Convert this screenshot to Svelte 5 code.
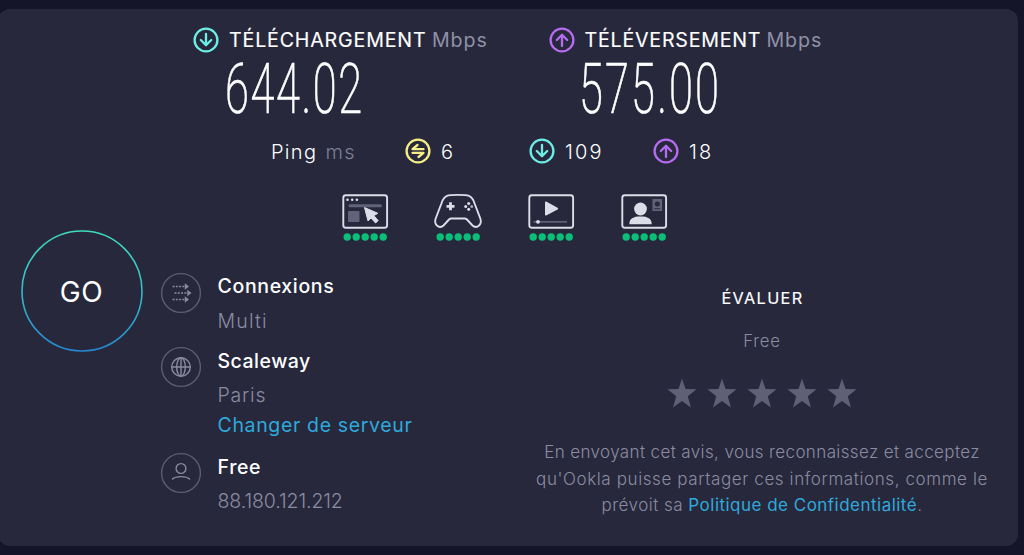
<!--
  SpeedtestResult — finished test panel: speeds, latency, quality scores,
  connection details and provider rating.
-->
<script lang="ts">
  type Direction = 'down' | 'up' | 'idle';

  const SPEEDS: { dir: Direction; label: string; value: string }[] = [
    { dir: 'down', label: 'TÉLÉCHARGEMENT', value: '644.02' },
    { dir: 'up', label: 'TÉLÉVERSEMENT', value: '575.00' },
  ];

  const PINGS: { dir: Direction; value: number }[] = [
    { dir: 'idle', value: 6 },
    { dir: 'down', value: 109 },
    { dir: 'up', value: 18 },
  ];

  const SCORES = ['web', 'gaming', 'video', 'call'];
  const DOTS = [0, 1, 2, 3, 4];
  const STARS = [1, 2, 3, 4, 5];

  const DETAILS = [
    { icon: 'multi', title: 'Connexions', text: 'Multi', link: '' },
    { icon: 'globe', title: 'Scaleway', text: 'Paris', link: 'Changer de serveur' },
    { icon: 'user', title: 'Free', text: '88.180.121.212', link: '' },
  ];

  let rating = $state(0);
</script>

{#snippet dirIcon(dir: Direction)}
  <svg class="dir dir--{dir}" viewBox="0 0 26 26" width="26" height="26">
    <circle cx="13" cy="13" r="11.4" />
    {#if dir === 'down'}
      <path d="M13 7v11M7.8 13l5.2 5.2 5.2-5.2" />
    {:else if dir === 'up'}
      <path d="M13 19V8M7.8 13L13 7.8l5.2 5.2" />
    {:else}
      <path d="M18.500 11.200H7.500l5-4.200M7.500 14.800h11l-5 4.200" />
    {/if}
  </svg>
{/snippet}

<main class="card">
  <section class="speeds">
    {#each SPEEDS as s}
      <div class="speed speed--{s.dir}">
        <div class="speed__head">
          {@render dirIcon(s.dir)}
          <span class="speed__label">{s.label}</span>
          <span class="speed__unit">Mbps</span>
        </div>
        <div class="speed__value">{s.value}</div>
      </div>
    {/each}
  </section>

  <section class="pings">
    <span class="pings__label">Ping</span>
    <span class="pings__unit">ms</span>
    {#each PINGS as p}
      <div class="ping ping--{p.dir}">
        {@render dirIcon(p.dir)}
        <span class="ping__value">{p.value}</span>
      </div>
    {/each}
  </section>

  <section class="scores">
    {#each SCORES as score}
      <svg class="score" viewBox="0 0 50 50" width="50" height="50">
        {#if score === 'gaming'}
          <path
            class="line"
            d="M14 3.8C17 2.5 33 2.5 36 3.8c3 1.2 4.500 4 5.500 7.500L47.500 27c1.800 6.500-4.500 9.800-8 6.500L34 27.500q-1-1-2.500-1h-13q-1.500 0-2.500 1l-5.500 6c-3.500 3.300-9.800 0-8-6.500L8.500 11.300C9.500 7.800 11 5 14 3.800z"
          />
          <path class="plus" d="M17.500 10.300v8M13.500 14.300h8" />
          <g class="fill">
            <circle cx="35.700" cy="11.500" r="1.500" />
            <circle cx="35.700" cy="17.300" r="1.500" />
            <circle cx="32.700" cy="14.400" r="1.500" />
            <circle class="dim" cx="38.700" cy="14.400" r="1.500" />
          </g>
        {:else}
          <rect class="line" x="3.300" y="3.300" width="43.800" height="32.400" rx="2.500" />
        {/if}
        {#if score === 'web'}
          <g class="fill">
            <circle cx="7.500" cy="7.700" r="1.300" />
            <circle cx="12.200" cy="7.700" r="1.300" />
            <circle cx="16.900" cy="7.700" r="1.300" />
          </g>
          <path class="bar" d="M10 13.700h30.500" />
          <rect class="dim" x="8" y="19" width="11.500" height="11" rx="1" />
          <path class="cursor" d="M24.500 15.500l3.500 13.500 3-3 4.600 5 2.600-2.400-4.400-5 4-2.300z" />
        {:else if score === 'video'}
          <path class="fill" d="M19 11q0-2 1.700-1.200L31.500 15.700q1.500.9 0 1.800l-10.800 5.800q-1.700.8-1.700-1z" />
          <path class="track" d="M7.500 29.800H41" />
          <circle class="fill" cx="12" cy="29.800" r="1.900" />
        {:else if score === 'call'}
          <circle class="fill" cx="21.500" cy="17" r="6.400" />
          <path class="fill" d="M10.300 32.300c0-6 4-7.800 11.200-7.800s11.200 1.800 11.200 7.800z" />
          <rect class="dim" x="33.500" y="7" width="9.600" height="12" />
          <circle class="hole" cx="38.300" cy="12" r="2.500" />
          <path class="hole" d="M35.300 16.300h6v1h-6z" />
        {/if}
        {#each DOTS as i}
          <circle class="dot" cx={7.2 + i * 9} cy="45" r="3.700" />
        {/each}
      </svg>
    {/each}
  </section>

  <section class="bottom">
    <button type="button" class="go">
      <svg viewBox="0 0 122 122" width="122" height="122">
        <defs>
          <linearGradient id="ring" x1="0" y1="0" x2="0" y2="1">
            <stop offset="0" stop-color="#3ddcba" />
            <stop offset="0.500" stop-color="#38b9c7" />
            <stop offset="1" stop-color="#2586cf" />
          </linearGradient>
        </defs>
        <circle cx="61" cy="61" r="60" fill="none" stroke="url(#ring)" stroke-width="1.600" />
      </svg>
      <span class="go__label">GO</span>
    </button>

    <div class="details">
      {#each DETAILS as d}
        <div class="detail detail--{d.icon}">
          <svg class="detail__icon" viewBox="0 0 42 42" width="42" height="42">
            <circle class="ring" cx="21" cy="21" r="19.400" />
            {#if d.icon === 'multi'}
              <path class="dash" d="M12.500 14.500h13M14.500 21h13M12.500 27.500h13" />
              <path class="heads" d="M24.800 11.300l4.200 3.200-4.200 3.200zM27.300 17.800l4.200 3.200-4.200 3.200zM24.800 24.300l4.200 3.200-4.200 3.200z" />
            {:else if d.icon === 'globe'}
              <circle cx="21" cy="21" r="9.300" />
              <ellipse cx="21" cy="21" rx="4.300" ry="9.300" />
              <path d="M11.700 21h18.600M21 11.700v18.600" />
            {:else}
              <circle cx="21" cy="16.500" r="4.900" />
              <path d="M12.500 27c3.500-3.200 13.500-3.200 17 0" />
            {/if}
          </svg>
          <div class="detail__body">
            <div class="detail__title">{d.title}</div>
            <div class="detail__text">{d.text}</div>
            {#if d.link}<a class="detail__link" href="#server">{d.link}</a>{/if}
          </div>
        </div>
      {/each}
    </div>

    <div class="rate">
      <div class="rate__title">ÉVALUER</div>
      <div class="rate__isp">Free</div>
      <div class="rate__stars">
        {#each STARS as n}
          <button
            type="button"
            class="star"
            class:star--on={n <= rating}
            aria-label="{n} / 5"
            onclick={() => (rating = n)}
          >
            <svg viewBox="0 0 30 30" width="30" height="30">
              <path
                d="M15 1.500l3.300 9.700 10.300.3-8.200 6.500 3 10.500L15 22.600l-8.400 5.900L9.600 18 1.400 11.500l10.300-.3z"
              />
            </svg>
          </button>
        {/each}
      </div>
      <p class="rate__terms">
        <span class="l1">En envoyant cet avis, vous reconnaissez et acceptez</span><br />
        <span class="l2">qu'Ookla puisse partager ces informations, comme le</span><br />
        <span class="l3">prévoit sa <a href="#privacy">Politique de Confidentialité</a>.</span>
      </p>
    </div>
  </section>
</main>

<style>
  :global(body) {
    background: #141529;
    overflow: hidden;
  }

  .card {
    box-sizing: border-box;
    width: 1020px;
    height: 537px;
    margin: 9px 0 9px -2px;
    padding-left: 2px;
    overflow: hidden;
    border-radius: 12px;
    background: #27283c;
    color: #fff;
    font-family: Inter, 'Liberation Sans', sans-serif;
    white-space: nowrap;
  }

  a {
    color: #2fa9dc;
    text-decoration: none;
  }

  button {
    padding: 0;
    border: 0;
    background: none;
    color: inherit;
    font: inherit;
    cursor: pointer;
  }

  svg {
    display: block;
    flex-shrink: 0;
  }

  .speeds {
    display: flex;
    height: 115px;
    padding: 17px 0 0 193px;
    box-sizing: border-box;
  }

  .speed {
    width: 355.5px;
  }

  .speed__head {
    display: flex;
    align-items: center;
    height: 27px;
    font-size: 19.6px;
    line-height: 24px;
  }

  .speed__label {
    width: 203px;
    margin-left: 10px;
    padding-top: 1px;
    font-weight: 400;
    letter-spacing: 0.85px;
    -webkit-text-stroke: 0.15px currentColor;
  }

  .speed--up .speed__label {
    width: 182px;
    letter-spacing: 0.8px;
  }

  .speed__unit {
    padding-top: 1px;
    color: #8f90a6;
    letter-spacing: 0.9px;
  }

  .speed__value {
    width: max-content;
    margin-left: 32px;
    font-family: Roboto, sans-serif;
    font-size: 70px;
    font-weight: 200;
    line-height: 72px;
    letter-spacing: 2.6px;
    -webkit-text-stroke: 0.7px currentColor;
    transform: scaleX(0.62);
    transform-origin: left;
  }

  .speed--up .speed__value {
    margin-left: 30.5px;
    letter-spacing: 3.5px;
  }

  .dir {
    fill: none;
    stroke-width: 2.3;
    stroke-linecap: round;
    stroke-linejoin: round;
  }

  .dir--down {
    stroke: #6ceee6;
  }

  .dir--up {
    stroke: #b56cf0;
  }

  .dir--idle {
    stroke: #f5ee86;
  }

  .pings {
    display: flex;
    align-items: center;
    height: 54px;
    padding-left: 271px;
    font-size: 20px;
    font-weight: 300;
    line-height: 24px;
    letter-spacing: 1.3px;
  }

  .pings__label {
    width: 54.5px;
    padding-top: 1px;
  }

  .pings__unit {
    width: 79px;
    padding-top: 1px;
    color: #7e7f94;
  }

  .ping {
    display: flex;
    align-items: center;
    gap: 10.5px;
    width: 124px;
  }

  .ping__value {
    padding-top: 1px;
    letter-spacing: 2.2px;
  }

  .scores {
    display: flex;
    gap: 43px;
    padding: 14px 0 0 340px;
  }

  .line {
    fill: none;
    stroke: #dcdde9;
    stroke-width: 1.9;
  }

  .fill {
    fill: #dcdde9;
  }

  .plus {
    stroke: #dcdde9;
    stroke-width: 2.8;
  }

  .bar {
    stroke: #62637a;
    stroke-width: 3;
    stroke-linecap: round;
  }

  .dim {
    fill: #62637a;
  }

  .fill .dim {
    fill: #a5a6b6;
  }

  .hole {
    fill: #27283c;
  }

  .cursor {
    fill: #dcdde9;
    stroke: #dcdde9;
    stroke-linejoin: round;
  }

  .track {
    stroke: #74758a;
    stroke-width: 1.2;
  }

  .dot {
    fill: #0cbf78;
  }

  .bottom {
    display: flex;
    align-items: flex-start;
  }

  .go {
    display: grid;
    place-items: center;
    width: 122px;
    height: 122px;
    margin: -12px 0 0 20.5px;
    font-size: 28px;
  }

  .go > * {
    grid-area: 1 / 1;
  }

  .go__label {
    padding-top: 1px;
    letter-spacing: 0.6px;
  }

  .details {
    width: 357px;
    padding-top: 28px;
    margin-left: 17.5px;
  }

  .detail {
    display: flex;
    height: 74.5px;
  }

  .detail--globe {
    height: 106px;
  }

  .detail__icon {
    margin-top: 1.5px;
    fill: none;
    stroke: #8a8b9f;
    stroke-width: 1.4;
    stroke-linecap: round;
  }

  .ring {
    stroke: #5c5d71;
  }

  .dash {
    stroke-dasharray: 2 1.3;
    stroke-linecap: butt;
  }

  .heads {
    fill: #8a8b9f;
    stroke: none;
  }

  .detail__body {
    padding-top: 1px;
    margin-left: 15.5px;
    font-size: 19.5px;
    font-weight: 300;
    letter-spacing: 0.65px;
  }

  .detail__title {
    height: 34.8px;
    font-weight: 500;
    line-height: 30px;
  }

  .detail--globe .detail__title {
    letter-spacing: 0.5px;
  }

  .detail__text {
    height: 30.2px;
    color: #8b8ca1;
    line-height: 30px;
    letter-spacing: 1.2px;
  }

  .detail--globe .detail__text {
    letter-spacing: 0.8px;
  }

  .detail--user .detail__text {
    letter-spacing: -0.1px;
  }

  .detail__link {
    display: block;
    font-weight: 400;
    line-height: 30px;
  }

  .rate {
    width: 470px;
    padding-top: 43px;
    margin-left: 10px;
    text-align: center;
  }

  .rate__title {
    font-size: 16.2px;
    font-weight: 400;
    line-height: 26px;
    letter-spacing: 1.4px;
    text-indent: 1px;
    -webkit-text-stroke: 0.15px currentColor;
  }

  .rate__isp {
    margin-top: 17px;
    color: #8b8ca1;
    font-size: 16.8px;
    font-weight: 300;
    line-height: 26px;
    letter-spacing: 0.8px;
  }

  .rate__stars {
    display: flex;
    justify-content: center;
    gap: 8.2px;
    margin-top: 23px;
  }

  .star {
    fill: #5f6076;
  }

  .star svg {
    width: 32px;
    height: 32px;
  }

  .star--on {
    fill: #f5ee86;
  }

  .rate__terms {
    margin: 30px 0 0;
    color: #8b8ca1;
    font-size: 17px;
    font-weight: 300;
    line-height: 26.7px;
  }

  .l1 {
    letter-spacing: 0.38px;
  }

  .l2 {
    letter-spacing: 0.6px;
  }

  .l3 {
    letter-spacing: 0.48px;
  }

  .rate__terms a {
    font-weight: 400;
  }
</style>
